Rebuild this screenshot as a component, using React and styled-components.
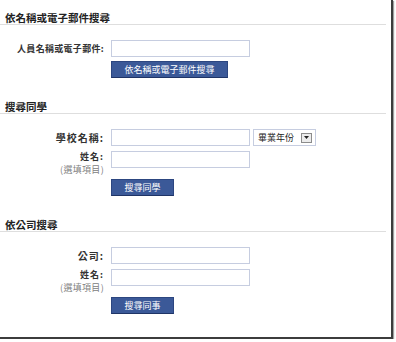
import React from "react"
import styled, { createGlobalStyle } from "styled-components"

const GlobalStyle = createGlobalStyle`
  body {
    margin: 0;
    background: #ffffff;
    font-family: "Noto Sans CJK TC", "Liberation Sans", sans-serif;
  }
`

const Frame = styled.div`
  box-sizing: border-box;
  width: 393px;
  height: 339px;
  background: #ffffff;
  border-right: 2px solid #3c3c3c;
  border-bottom: 2px solid #3c3c3c;
  box-shadow: 1px 1px 1px #a0a0a0;
  padding-top: 12px;
`

const Section = styled.section`
  margin-bottom: 23px;
`

const Heading = styled.h2`
  width: 381px;
  margin: 0;
  padding: 0 0 1px 5px;
  font-size: 10.5px;
  line-height: 11px;
  font-weight: bold;
  color: #222;
  border-bottom: 1px solid #dedede;
`

const Form = styled.div`
  display: grid;
  grid-template-columns: 104px auto;
  column-gap: 7px;
  row-gap: 5px;
  margin-top: 15px;
  align-items: start;
`

const Label = styled.label`
  text-align: right;
  font-size: ${(p) => p.$size || 10}px;
  letter-spacing: ${(p) => p.$spacing ?? 1}px;
  line-height: 17px;
  font-weight: bold;
  color: #333;
`

const LabelStack = styled.div`
  display: flex;
  flex-direction: column;
  align-items: flex-end;
  margin-top: -1px;
  font-size: 9px;
  line-height: 13px;
  letter-spacing: 1px;
  font-weight: bold;
  color: #333;
`

const Optional = styled.span`
  font-weight: normal;
  letter-spacing: 0.3px;
  color: #808080;
`

const Field = styled.div`
  display: flex;
  gap: 3px;
`

const Input = styled.input`
  box-sizing: border-box;
  width: 139px;
  height: 17px;
  border: 1px solid #c6cde0;
  padding: 0 3px;
  font-size: 10px;
`

const Select = styled.div`
  box-sizing: border-box;
  display: flex;
  align-items: center;
  justify-content: space-between;
  width: 63px;
  height: 17px;
  border: 1px solid #c6cde0;
  padding: 0 3px 0 4px;
  font-size: 9px;
  color: #222;
`

const Arrow = styled.span`
  box-sizing: border-box;
  display: flex;
  align-items: center;
  justify-content: center;
  width: 11px;
  height: 10px;
  background: #ececec;
  border: 1px solid #8c8c8c;
`

const Button = styled.button`
  box-sizing: border-box;
  width: ${(p) => p.$width}px;
  height: 17px;
  margin-top: ${(p) => p.$top || 0}px;
  background: #3b5998;
  border: 1px solid #2c4680;
  border-bottom-color: #1f3466;
  color: #ffffff;
  font-family: inherit;
  font-size: 9px;
  line-height: 14px;
  padding: 0;
  cursor: pointer;
`

const Spacer = styled.div``

const DropArrow = () => (
  <Arrow>
    <svg width="5" height="3" viewBox="0 0 5 3">
      <polygon points="0,0 5,0 2.5,3" fill="#222" />
    </svg>
  </Arrow>
)

const NameRow = () => (
  <>
    <LabelStack>
      <span>姓名:</span>
      <Optional>(選填項目)</Optional>
    </LabelStack>
    <Input />
  </>
)

const App = () => (
  <Frame>
    <GlobalStyle />
    <Section>
      <Heading>依名稱或電子郵件搜尋</Heading>
      <Form>
        <Label $size={9} $spacing={0.3}>人員名稱或電子郵件:</Label>
        <Input />
        <Spacer />
        <Button $width={117} $top={-1}>依名稱或電子郵件搜尋</Button>
      </Form>
    </Section>
    <Section>
      <Heading>搜尋同學</Heading>
      <Form>
        <Label>學校名稱:</Label>
        <Field>
          <Input />
          <Select>
            畢業年份
            <DropArrow />
          </Select>
        </Field>
        <NameRow />
        <Spacer />
        <Button $width={63} $top={-2}>搜尋同學</Button>
      </Form>
    </Section>
    <Section>
      <Heading>依公司搜尋</Heading>
      <Form>
        <Label>公司:</Label>
        <Input />
        <NameRow />
        <Spacer />
        <Button $width={63} $top={-2}>搜尋同事</Button>
      </Form>
    </Section>
  </Frame>
)

export default App
